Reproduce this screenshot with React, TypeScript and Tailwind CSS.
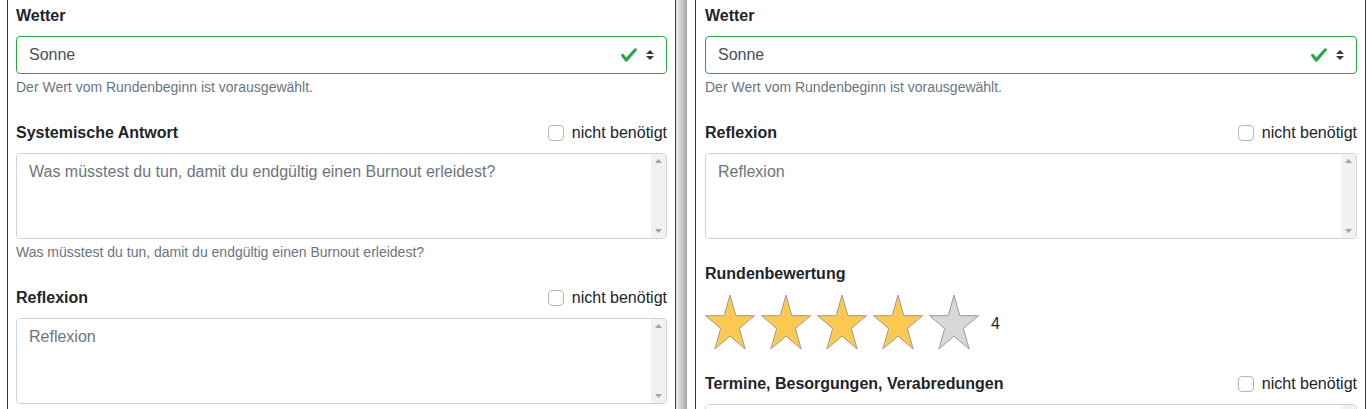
// Zwei Formular-Spalten für die Rundenerfassung (Wetter, Antworten, Bewertung)

const font = { fontFamily: '"Liberation Sans", Arial, sans-serif' };

function NotNeeded() {
  return (
    <label className="flex items-center text-base leading-6 text-[#212529]">
      <span className="mr-2 h-4 w-4 rounded border border-[#adb5bd] bg-white" />
      <span>nicht benötigt</span>
    </label>
  );
}

function Label({ text, optional }: { text: string; optional?: boolean }) {
  return (
    <div className="mb-2 flex items-center justify-between">
      <span className="text-base font-bold leading-6 text-[#212529]">{text}</span>
      {optional && <NotNeeded />}
    </div>
  );
}

function Help({ text }: { text: string }) {
  return <p className="mt-1 text-sm leading-[19px] text-[#6c757d]">{text}</p>;
}

function WeatherSelect() {
  return (
    <div className="flex h-[38px] items-center rounded border border-[#28a745] bg-white pl-3 pr-3">
      <span className="flex-1 text-base leading-6 text-[#495057]">Sonne</span>
      <svg width="18" height="18" viewBox="0 0 8 8" className="mr-2">
        <path
          fill="#28a745"
          d="M2.3 6.73L.6 4.53c-.4-1.04.46-1.4 1.1-.8l1.1 1.4 3.4-3.8c.6-.63 1.6-.27 1.2.7l-4 4.6c-.43.5-.8.4-1.1.1z"
        />
      </svg>
      <svg width="8" height="10" viewBox="0 0 4 5">
        <path fill="#343a40" d="M2 0L0 2h4zm0 5L0 3h4z" />
      </svg>
    </div>
  );
}

// Textarea mit klassischer (deaktivierter) Scrollleiste
function Area({ placeholder }: { placeholder: string }) {
  return (
    <div className="flex h-[86px] overflow-hidden rounded border border-[#ced4da] bg-white">
      <textarea
        rows={3}
        placeholder={placeholder}
        className="block flex-1 resize-none overflow-hidden bg-white px-3 py-1.5 text-base leading-6 text-[#495057] outline-none placeholder:text-[#6c757d]"
        style={font}
      />
      <div className="flex w-[15px] flex-col items-center justify-between bg-[#f1f1f1] py-[5px]">
        <svg width="7" height="4" viewBox="0 0 7 4">
          <path fill="#a3a3a3" d="M3.5 0L7 4H0z" />
        </svg>
        <svg width="7" height="4" viewBox="0 0 7 4">
          <path fill="#a3a3a3" d="M0 0h7L3.5 4z" />
        </svg>
      </div>
    </div>
  );
}

function Star({ filled }: { filled: boolean }) {
  return (
    <svg width="50" height="56" viewBox="0 0 50 56">
      <polygon
        points="25,1 30.77,21.7 49.5,21.7 34.35,34.4 40.14,55 25,42.2 9.86,55 15.65,34.4 0.5,21.7 19.23,21.7"
        fill={filled ? '#fdc94f' : '#d8d8d8'}
        stroke="#9b9b9b"
        strokeWidth="1"
        strokeLinejoin="round"
      />
    </svg>
  );
}

function Rating({ value }: { value: number }) {
  return (
    <div className="mb-[22px] mt-[1px] flex h-[56px] items-center">
      <div className="flex gap-[6px]">
        {[1, 2, 3, 4, 5].map((n) => (
          <Star key={n} filled={n <= value} />
        ))}
      </div>
      <span className="ml-3 mt-1 text-base leading-6 text-[#212529]">{value}</span>
    </div>
  );
}

export default function App() {
  return (
    <div className="flex h-[409px] overflow-hidden bg-white" style={font}>
      {/* linke Spalte */}
      <div className="ml-[7px] w-[669px] shrink-0 border-x border-[#3a3a3a] pl-2 pr-2 pt-1">
        <div className="mb-6">
          <Label text="Wetter" />
          <WeatherSelect />
          <Help text="Der Wert vom Rundenbeginn ist vorausgewählt." />
        </div>
        <div className="mb-6">
          <Label text="Systemische Antwort" optional />
          <Area placeholder="Was müsstest du tun, damit du endgültig einen Burnout erleidest?" />
          <Help text="Was müsstest du tun, damit du endgültig einen Burnout erleidest?" />
        </div>
        <div>
          <Label text="Reflexion" optional />
          <Area placeholder="Reflexion" />
        </div>
      </div>

      {/* Trenner */}
      <div className="mr-2 w-[11px] shrink-0 bg-linear-to-r from-[#ececec] via-[#cdcdcd] to-[#a6a6a6]" />

      {/* rechte Spalte */}
      <div className="w-[671px] shrink-0 border-x border-[#3a3a3a] pl-[9px] pr-2 pt-1">
        <div className="mb-6">
          <Label text="Wetter" />
          <WeatherSelect />
          <Help text="Der Wert vom Rundenbeginn ist vorausgewählt." />
        </div>
        <div className="mb-[23px]">
          <Label text="Reflexion" optional />
          <Area placeholder="Reflexion" />
        </div>
        <div>
          <Label text="Rundenbewertung" />
          <Rating value={4} />
        </div>
        <div>
          <Label text="Termine, Besorgungen, Verabredungen" optional />
          <Area placeholder="" />
        </div>
      </div>
    </div>
  );
}
